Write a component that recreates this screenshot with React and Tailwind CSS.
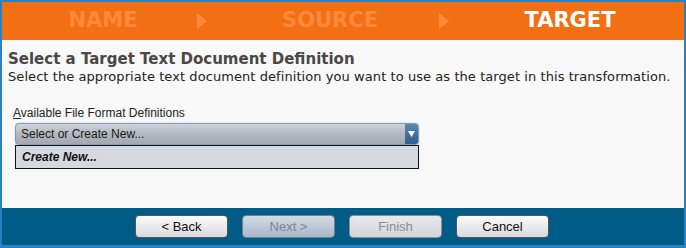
export default function App() {
  const arrow = (
    <svg width="10" height="16" viewBox="0 0 10 16" className="shrink-0">
      <polygon points="0,0 10,8 0,16" fill="#fd8a3c" />
    </svg>
  );

  const btn =
    "w-[93px] h-[23px] rounded-[4px] border text-[13px] flex items-center justify-center";

  return (
    <div className="w-[686px] h-[248px] bg-[#2b80c1] pt-[2px] pl-[2px] pr-[2px] pb-[3px] flex">
      <div className="flex-1 flex flex-col">
        <div className="h-[38px] bg-[#f26f14] flex items-center font-['DejaVu_Sans',sans-serif] font-bold text-[21px] text-[#fd8a3c]">
          <div className="ml-[34px] w-[134px] text-center">NAME</div>
          <div className="ml-[27px]">{arrow}</div>
          <div className="ml-[56px] w-[134px] text-center">SOURCE</div>
          <div className="ml-[42px]">{arrow}</div>
          <div className="ml-[54px] w-[134px] text-center text-white">TARGET</div>
        </div>

        <div className="flex-1 bg-[#f8f8f8] pl-[6px] pt-[9px]">
          <h1 className="font-['DejaVu_Sans',sans-serif] font-bold text-[15px] leading-[20px] text-[#4a4744]">
            Select a Target Text Document Definition
          </h1>
          <p className="font-['DejaVu_Sans',sans-serif] text-[13px] tracking-[0.07px] leading-[16px] text-[#222]">
            Select the appropriate text document definition you want to use as the target in this transformation.
          </p>

          <div className="mt-[21px] ml-[5px] font-['Liberation_Sans',Arial,sans-serif] text-[12px] leading-[14px] text-[#222]">
            <span className="underline">A</span>vailable File Format Definitions
          </div>

          <div className="mt-[3px] ml-[7px] w-[404px]">
            <div className="h-[22px] rounded-[4px] border border-[#7f9dbd] shadow-[0_0_1px_#3b6ea5] bg-gradient-to-b from-[#d0d3da] via-[#b3b7c0] to-[#a4a8b2] flex items-center overflow-hidden">
              <span className="flex-1 pl-[5px] font-['Liberation_Sans',Arial,sans-serif] text-[12px] text-[#1a1a1a]">
                Select or Create New...
              </span>
              <div className="w-[13px] h-full bg-gradient-to-b from-[#5d87b3] to-[#2f5d8c] flex items-center justify-center">
                <svg width="7" height="6" viewBox="0 0 7 6">
                  <polygon points="0,0 7,0 3.5,6" fill="#fff" />
                </svg>
              </div>
            </div>
            <div className="h-[24px] bg-[#d5d8e0] border border-[#111] flex items-center pl-[6px] font-['Liberation_Sans',Arial,sans-serif] text-[12px] font-bold italic text-[#111]">
              Create New...
            </div>
          </div>
        </div>

        <div className="h-[37px] bg-[#005b86] flex items-center pl-[133px] gap-[14px] font-['Liberation_Sans',Arial,sans-serif]">
          <button className={btn + " border-[#555] bg-gradient-to-b from-[#fbfbfc] to-[#d9dadf] text-[#111]"}>
            &lt; Back
          </button>
          <button className={btn + " border-[#6f7f92] bg-gradient-to-b from-[#d3dbe5] to-[#a9b7c8] text-[#7d8690]"}>
            Next &gt;
          </button>
          <button className={btn + " border-[#8a8f98] bg-gradient-to-b from-[#e9eaed] to-[#d3d5da] text-[#8a8d93]"}>
            Finish
          </button>
          <button className={btn + " border-[#555] bg-gradient-to-b from-[#fbfbfc] to-[#d9dadf] text-[#111]"}>
            Cancel
          </button>
        </div>
      </div>
    </div>
  );
}
